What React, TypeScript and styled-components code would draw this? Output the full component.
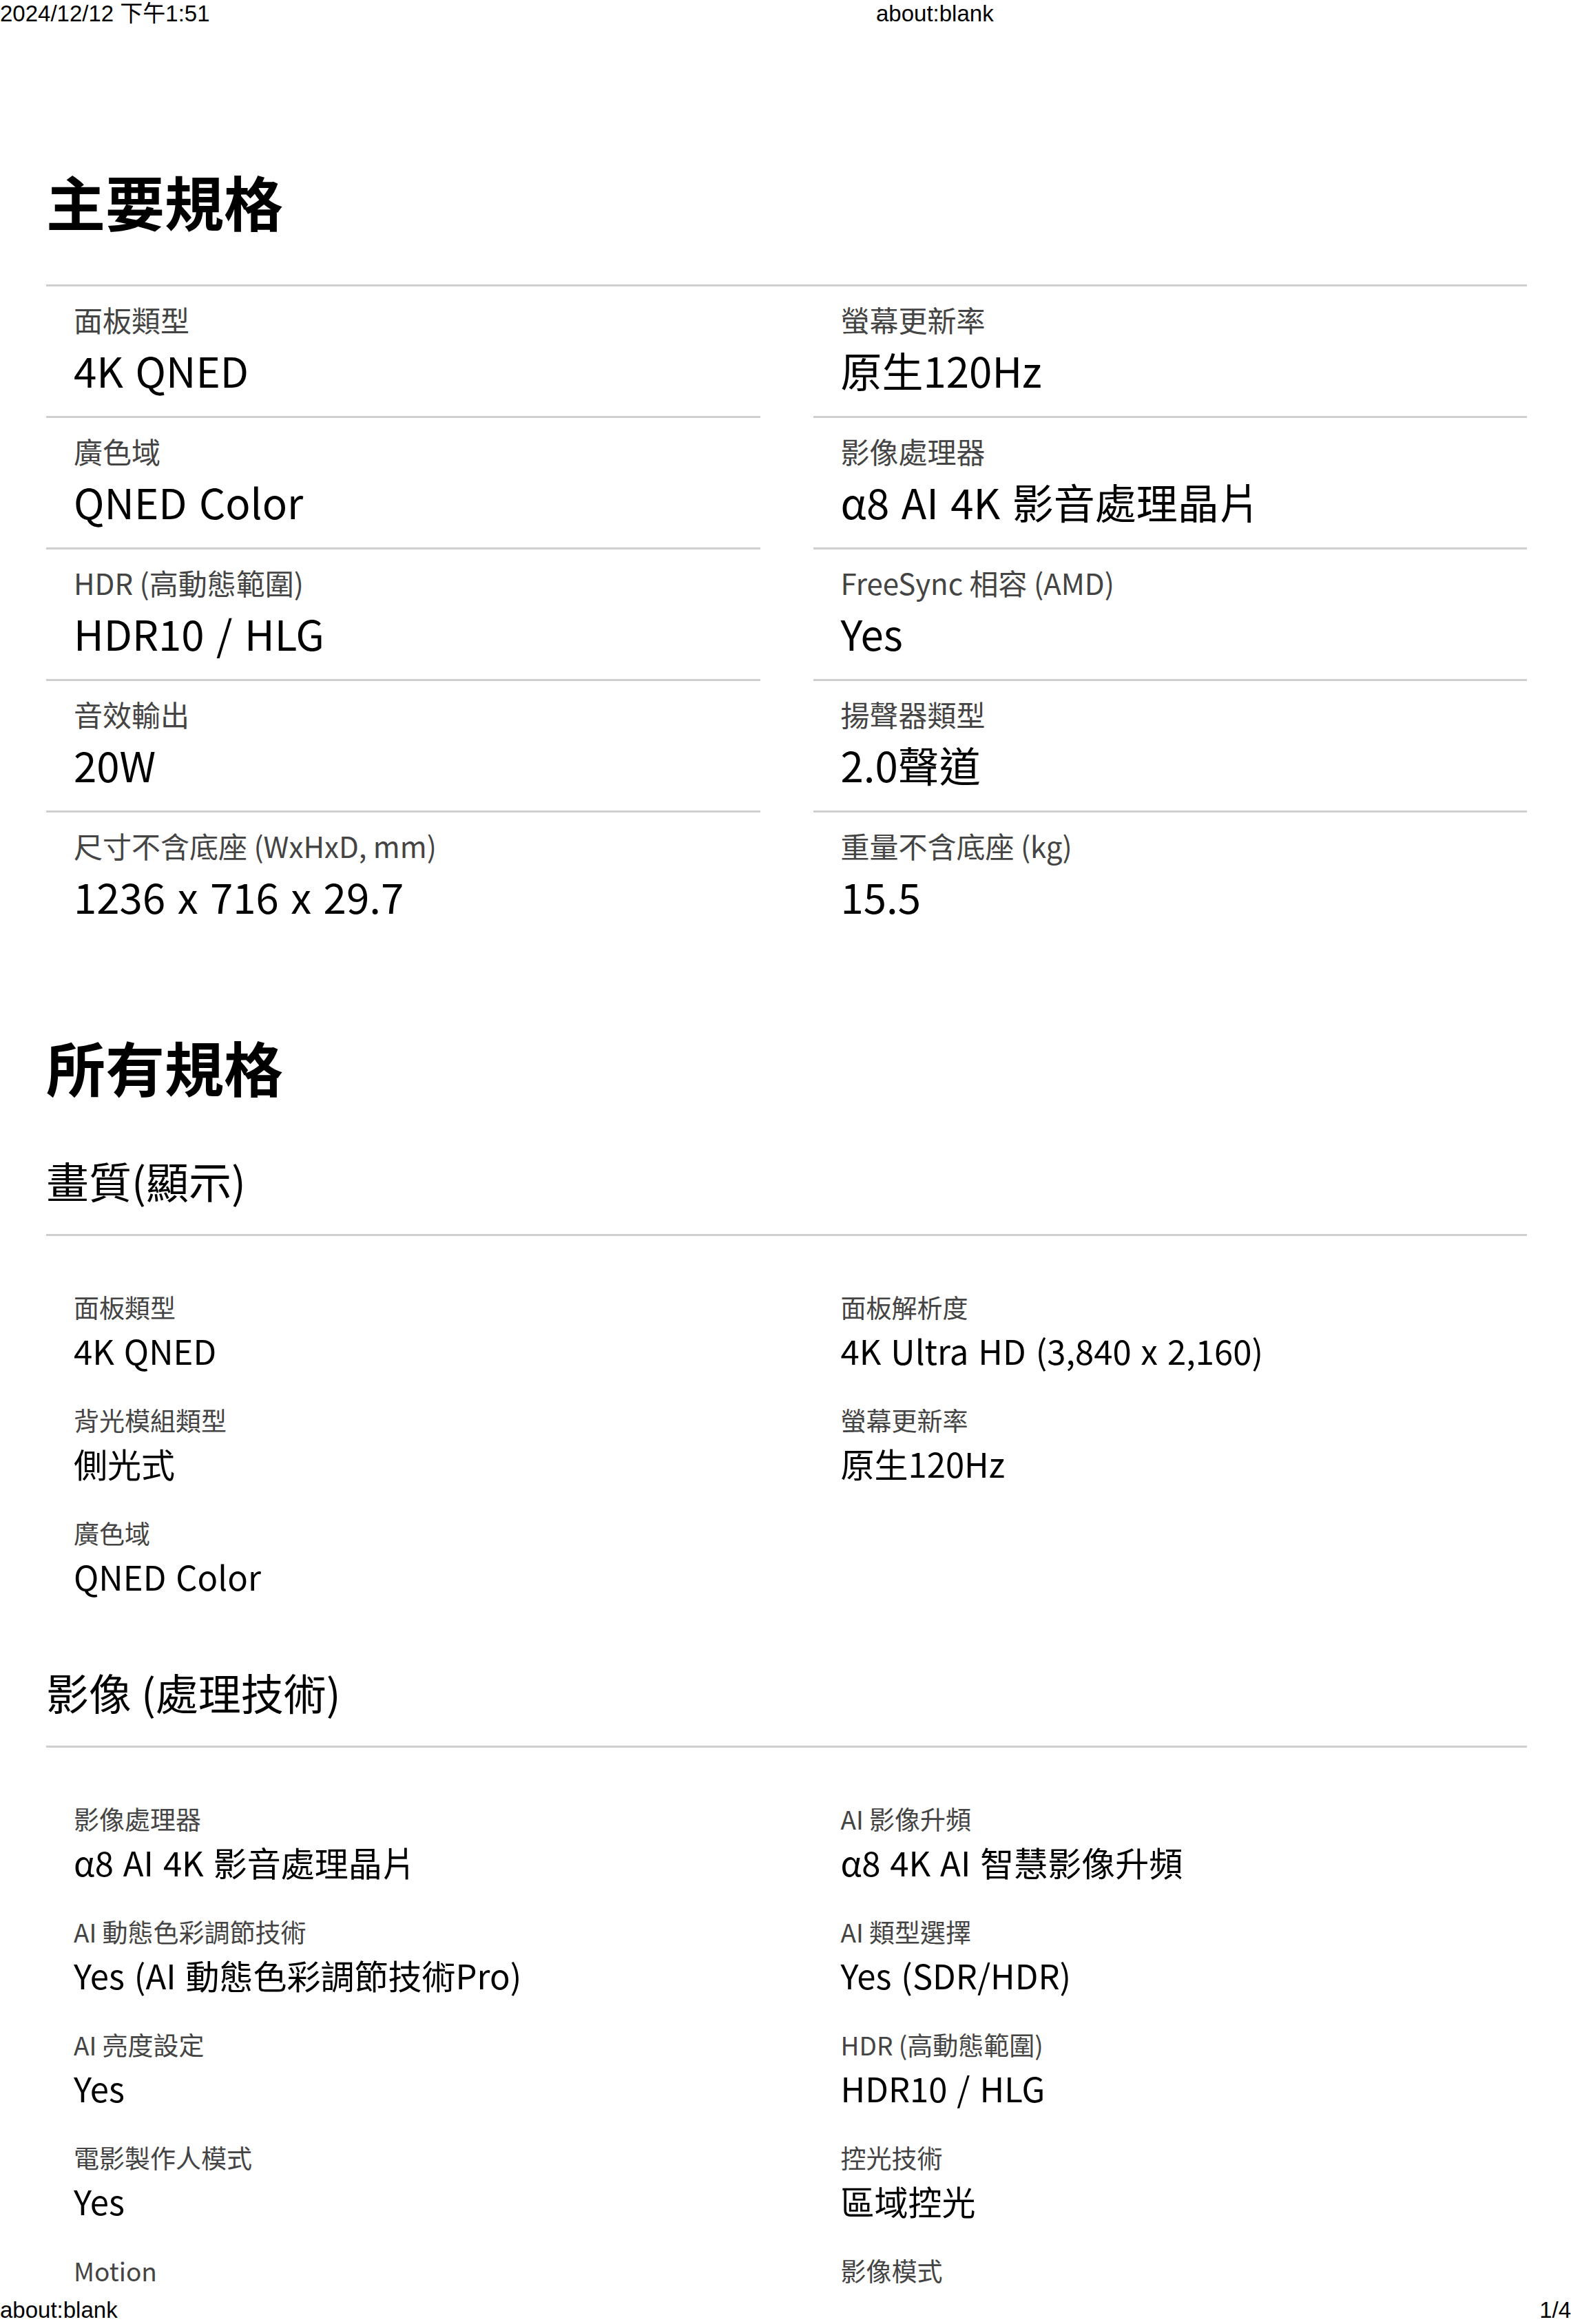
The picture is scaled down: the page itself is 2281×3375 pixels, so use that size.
import React from "react";
import styled, { createGlobalStyle } from "styled-components";

const GlobalStyle = createGlobalStyle`
  html, body {
    margin: 0;
    padding: 0;
    background: #ffffff;
  }
  body {
    font-family: "Noto Sans CJK TC", "Noto Sans", sans-serif;
    color: #000;
  }
  * { box-sizing: border-box; }
`;

const Page = styled.div`
  position: relative;
  width: 2281px;
  height: 3375px;
  overflow: hidden;
  background: #fff;
  padding: 240px 64px 0 67px;
  font-family: "Noto Sans CJK TC", "Noto Sans", sans-serif;
`;

const PrintBar = styled.div<{ $bottom?: boolean }>`
  position: absolute;
  left: 0;
  right: 0;
  ${(p) => (p.$bottom ? "bottom: 0;" : "top: 0;")}
  display: flex;
  justify-content: ${(p) => (p.$bottom ? "space-between" : "flex-start")};
  font-family: "Liberation Sans", "Noto Sans CJK TC", sans-serif;
  font-size: 33px;
  line-height: 40px;
  color: #000;
`;

const PrintDate = styled.span`
  flex: 0 0 1272px;
`;

const PrintText = styled.span`
  white-space: nowrap;
`;

const SectionTitle = styled.h2<{ $gap: number }>`
  margin: ${(p) => p.$gap}px 0 0;
  font-size: 86px;
  font-weight: 700;
  line-height: 103px;
  color: #000;
`;

const KeyGrid = styled.div`
  display: grid;
  grid-template-columns: 1fr 1fr;
  column-gap: 77px;
  margin-top: 70px;
  border-top: 3px solid #cfcfcf;
`;

const KeyCell = styled.div<{ $last?: boolean }>`
  padding: 18px 0 27px 40px;
  border-bottom: ${(p) => (p.$last ? "none" : "3px solid #cfcfcf")};
`;

const KeyLabel = styled.div`
  font-size: 42px;
  line-height: 60px;
  color: #444;
`;

const KeyValue = styled.div`
  margin-top: 3px;
  font-size: 60px;
  line-height: 80px;
  word-spacing: 4px;
  color: #000;
`;

const GroupTitle = styled.h3<{ $gap: number }>`
  margin: ${(p) => p.$gap}px 0 0;
  padding-bottom: 37px;
  border-bottom: 3px solid #cfcfcf;
  font-size: 62px;
  font-weight: 400;
  line-height: 81px;
  color: #000;
`;

const DetailGrid = styled.div`
  display: grid;
  grid-template-columns: 1fr 1fr;
  column-gap: 77px;
  row-gap: 43px;
  padding: 78px 0 95px;
`;

const DetailCell = styled.div`
  padding-left: 40px;
  min-height: 121px;
`;

const DetailLabel = styled.div`
  font-size: 37px;
  line-height: 50px;
  color: #444;
`;

const DetailValue = styled.div`
  margin-top: 5px;
  font-size: 49px;
  line-height: 66px;
  word-spacing: 3px;
  color: #000;
`;

type Spec = { label: string; value?: string };

const keySpecs: Spec[] = [
  { label: "面板類型", value: "4K QNED" },
  { label: "螢幕更新率", value: "原生120Hz" },
  { label: "廣色域", value: "QNED Color" },
  { label: "影像處理器", value: "α8 AI 4K 影音處理晶片" },
  { label: "HDR (高動態範圍)", value: "HDR10 / HLG" },
  { label: "FreeSync 相容 (AMD)", value: "Yes" },
  { label: "音效輸出", value: "20W" },
  { label: "揚聲器類型", value: "2.0聲道" },
  { label: "尺寸不含底座 (WxHxD, mm)", value: "1236 x 716 x 29.7" },
  { label: "重量不含底座 (kg)", value: "15.5" },
];

const groups: { title: string; gap: number; items: (Spec | null)[] }[] = [
  {
    title: "畫質(顯示)",
    gap: 74,
    items: [
      { label: "面板類型", value: "4K QNED" },
      { label: "面板解析度", value: "4K Ultra HD (3,840 x 2,160)" },
      { label: "背光模組類型", value: "側光式" },
      { label: "螢幕更新率", value: "原生120Hz" },
      { label: "廣色域", value: "QNED Color" },
      null,
    ],
  },
  {
    title: "影像 (處理技術)",
    gap: 0,
    items: [
      { label: "影像處理器", value: "α8 AI 4K 影音處理晶片" },
      { label: "AI 影像升頻", value: "α8 4K AI 智慧影像升頻" },
      { label: "AI 動態色彩調節技術", value: "Yes (AI 動態色彩調節技術Pro)" },
      { label: "AI 類型選擇", value: "Yes (SDR/HDR)" },
      { label: "AI 亮度設定", value: "Yes" },
      { label: "HDR (高動態範圍)", value: "HDR10 / HLG" },
      { label: "電影製作人模式", value: "Yes" },
      { label: "控光技術", value: "區域控光" },
      { label: "Motion" },
      { label: "影像模式" },
    ],
  },
];

export default function App() {
  return (
    <>
      <GlobalStyle />
      <Page>
        <PrintBar>
          <PrintDate>2024/12/12 下午1:51</PrintDate>
          <PrintText>about:blank</PrintText>
        </PrintBar>

        <SectionTitle $gap={0}>主要規格</SectionTitle>
        <KeyGrid>
          {keySpecs.map((s, i) => (
            <KeyCell key={i} $last={i >= keySpecs.length - 2}>
              <KeyLabel>{s.label}</KeyLabel>
              <KeyValue>{s.value}</KeyValue>
            </KeyCell>
          ))}
        </KeyGrid>

        <SectionTitle $gap={129}>所有規格</SectionTitle>
        {groups.map((g) => (
          <React.Fragment key={g.title}>
            <GroupTitle $gap={g.gap}>{g.title}</GroupTitle>
            <DetailGrid>
              {g.items.map((s, i) =>
                s ? (
                  <DetailCell key={i}>
                    <DetailLabel>{s.label}</DetailLabel>
                    {s.value && <DetailValue>{s.value}</DetailValue>}
                  </DetailCell>
                ) : (
                  <DetailCell key={i} />
                )
              )}
            </DetailGrid>
          </React.Fragment>
        ))}

        <PrintBar $bottom>
          <PrintText>about:blank</PrintText>
          <PrintText>1/4</PrintText>
        </PrintBar>
      </Page>
    </>
  );
}
